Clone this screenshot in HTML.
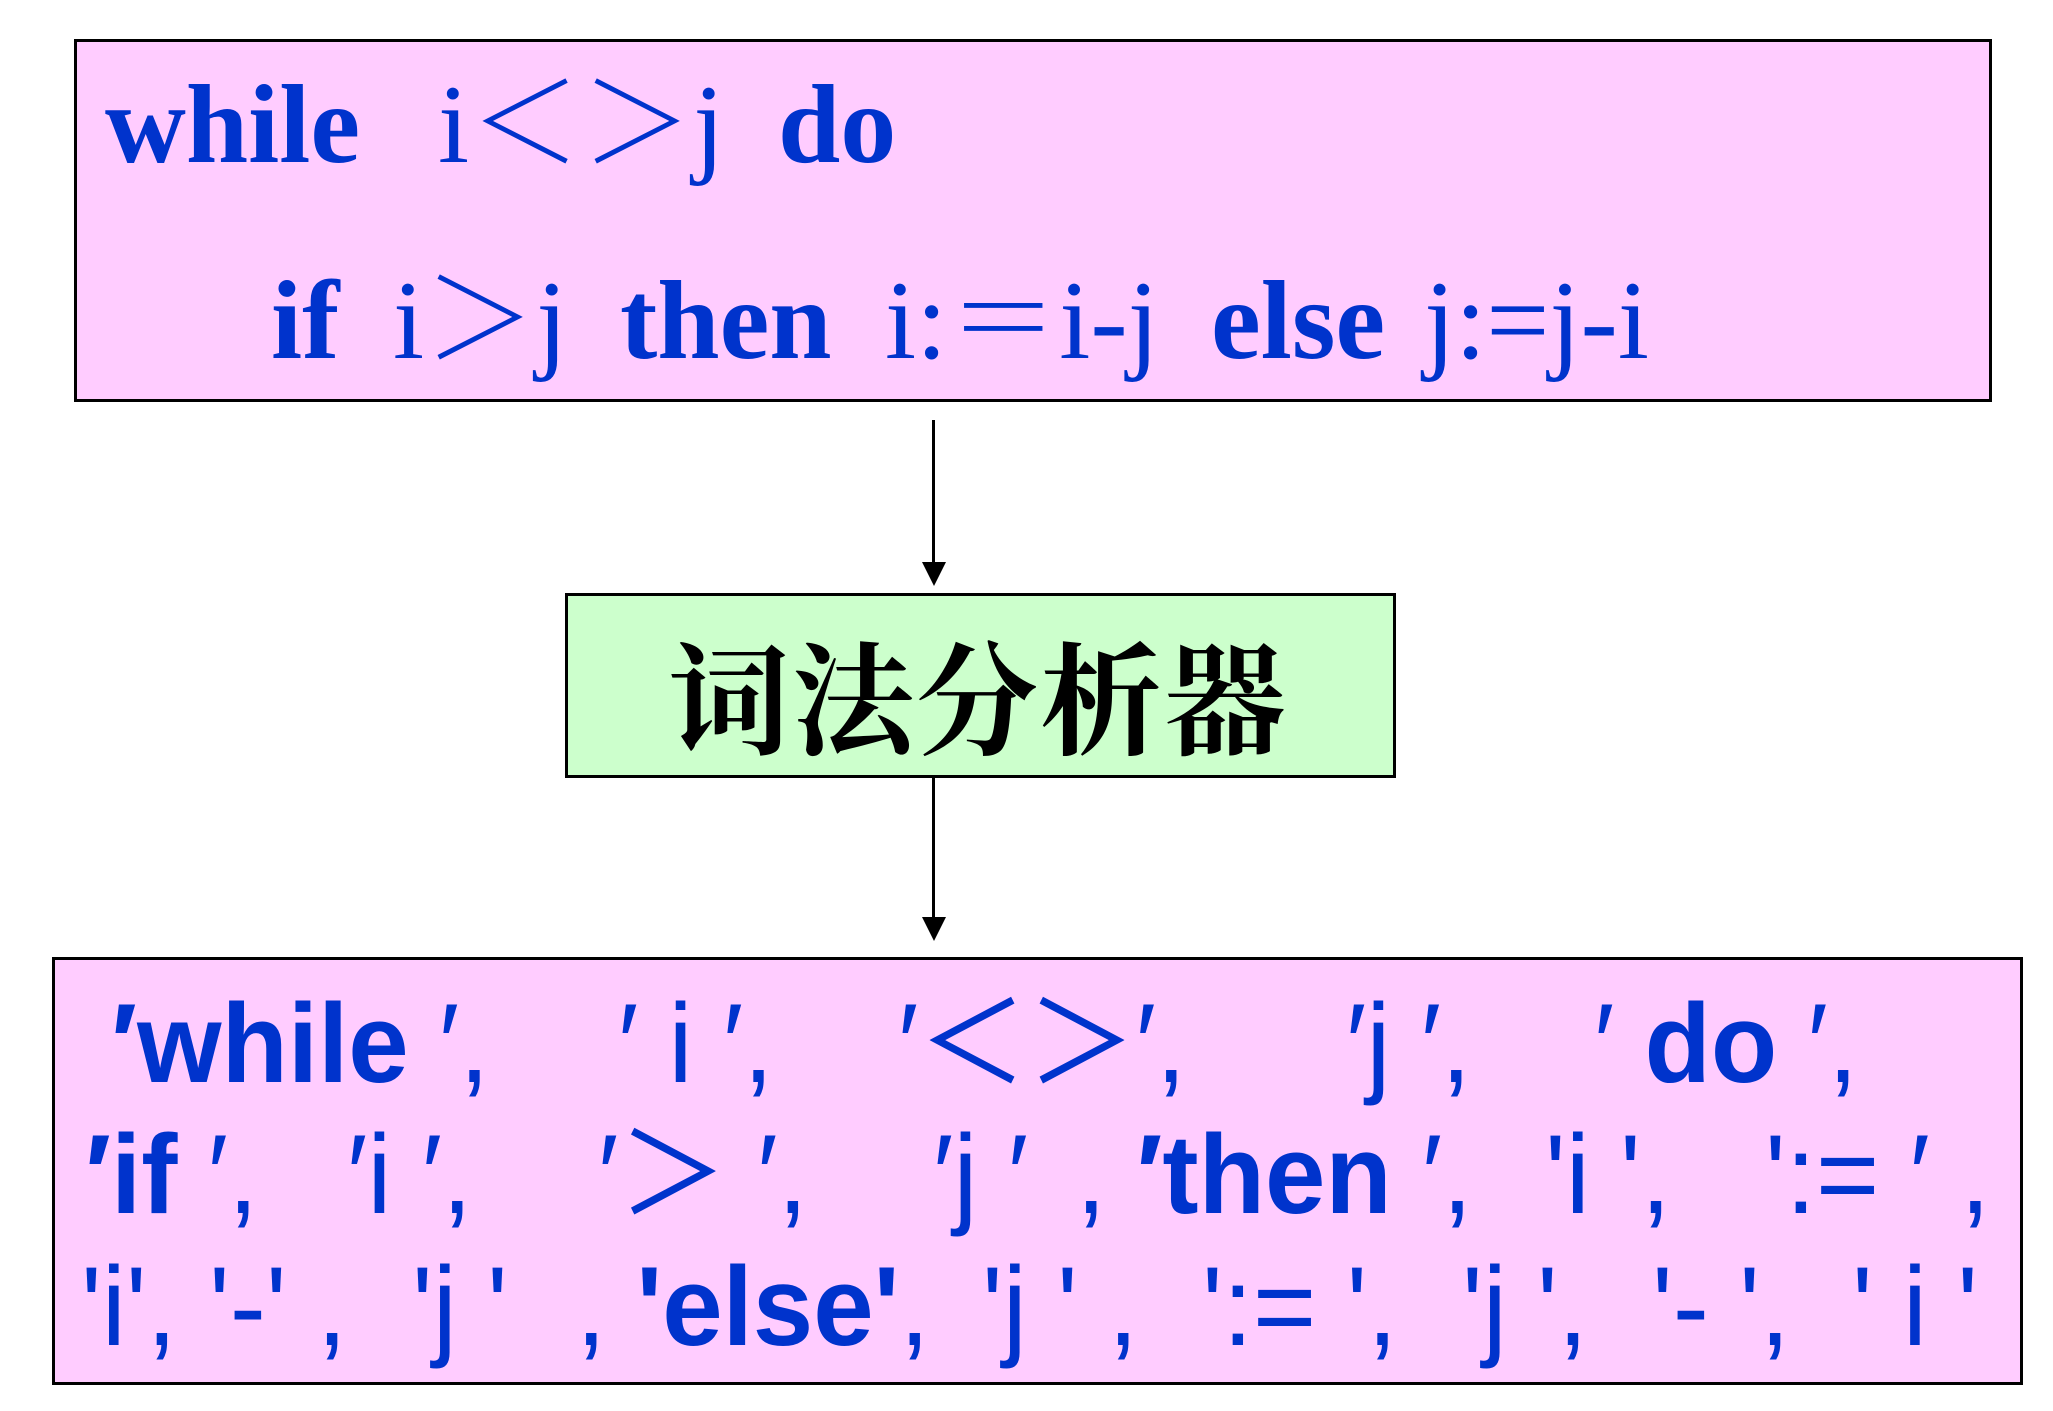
<!DOCTYPE html>
<html><head><meta charset="utf-8"><style>
html,body{margin:0;padding:0;background:#fff;}
body{width:2053px;height:1411px;position:relative;overflow:hidden;}
.box{position:absolute;border:3px solid #000;box-sizing:border-box;}
.t{position:absolute;white-space:pre;color:#0033CC;line-height:1;}
.s{font-family:"Liberation Serif","Noto Serif CJK SC",serif;font-size:112px;}
.a{font-family:"Liberation Sans",sans-serif;font-size:112px;transform:scaleX(0.97);transform-origin:0 0;}
b{font-weight:bold}
</style></head><body>
<div class="box" style="left:74px;top:39px;width:1918px;height:363px;background:#FFCCFF"></div>
<div class="box" style="left:565px;top:593px;width:831px;height:185px;background:#CCFFCC"></div>
<div class="box" style="left:52px;top:957px;width:1971px;height:428px;background:#FFCCFF"></div>

<div style="position:absolute;left:932px;top:420px;width:3px;height:148px;background:#000"></div>
<svg style="position:absolute;left:922px;top:562px" width="24" height="24"><polygon points="0,0 24,0 12,24" fill="#000"/></svg>
<div style="position:absolute;left:932px;top:777px;width:3px;height:146px;background:#000"></div>
<svg style="position:absolute;left:922px;top:917px" width="24" height="24"><polygon points="0,0 24,0 12,24" fill="#000"/></svg>

<div class="t s" style="left:105px;top:69px"><b>while</b></div>
<div class="t s" style="left:438px;top:69px">i＜＞j</div>
<div class="t s" style="left:778px;top:69px"><b>do</b></div>
<div class="t s" style="left:271px;top:265px"><b>if</b></div>
<div class="t s" style="left:393px;top:265px">i＞j</div>
<div class="t s" style="left:620px;top:265px"><b>then</b></div>
<div class="t s" style="left:885px;top:265px">i:＝i-j</div>
<div class="t s" style="left:1211px;top:265px"><b>else</b></div>
<div class="t s" style="left:1424px;top:265px">j:=j-i</div>

<div class="t" style="left:668px;top:632px;color:#000;font-family:'Noto Serif CJK SC',serif;font-weight:bold;font-size:122px;letter-spacing:2px">词法分析器</div>

<div class="t a" style="left:111px;top:988px"><b>′while</b> ′,</div>
<div class="t a" style="left:618px;top:988px">′ i ′,</div>
<div class="t a" style="left:898px;top:988px">′＜＞′,</div>
<div class="t a" style="left:1346px;top:988px">′j ′,</div>
<div class="t a" style="left:1594px;top:988px">′ <b>do</b> ′,</div>

<div class="t a" style="left:85px;top:1119px"><b>′if</b> ′,</div>
<div class="t a" style="left:347px;top:1119px">′i ′,</div>
<div class="t a" style="left:598px;top:1119px">′＞ ′,</div>
<div class="t a" style="left:933px;top:1119px">′j ′</div>
<div class="t a" style="left:1076px;top:1119px">, <b>′then</b> ′,</div>
<div class="t a" style="left:1545px;top:1119px">'i ',</div>
<div class="t a" style="left:1765px;top:1119px">':= ′ ,</div>

<div class="t a" style="left:81px;top:1251px">'i',</div>
<div class="t a" style="left:209px;top:1251px">'-' ,</div>
<div class="t a" style="left:412px;top:1251px">'j '</div>
<div class="t a" style="left:576px;top:1251px">, <b>'else'</b>,</div>
<div class="t a" style="left:982px;top:1251px">'j ' ,</div>
<div class="t a" style="left:1202px;top:1251px">':= ',</div>
<div class="t a" style="left:1462px;top:1251px">'j ',</div>
<div class="t a" style="left:1652px;top:1251px">'- ',</div>
<div class="t a" style="left:1852px;top:1251px">' i '</div>
</body></html>
